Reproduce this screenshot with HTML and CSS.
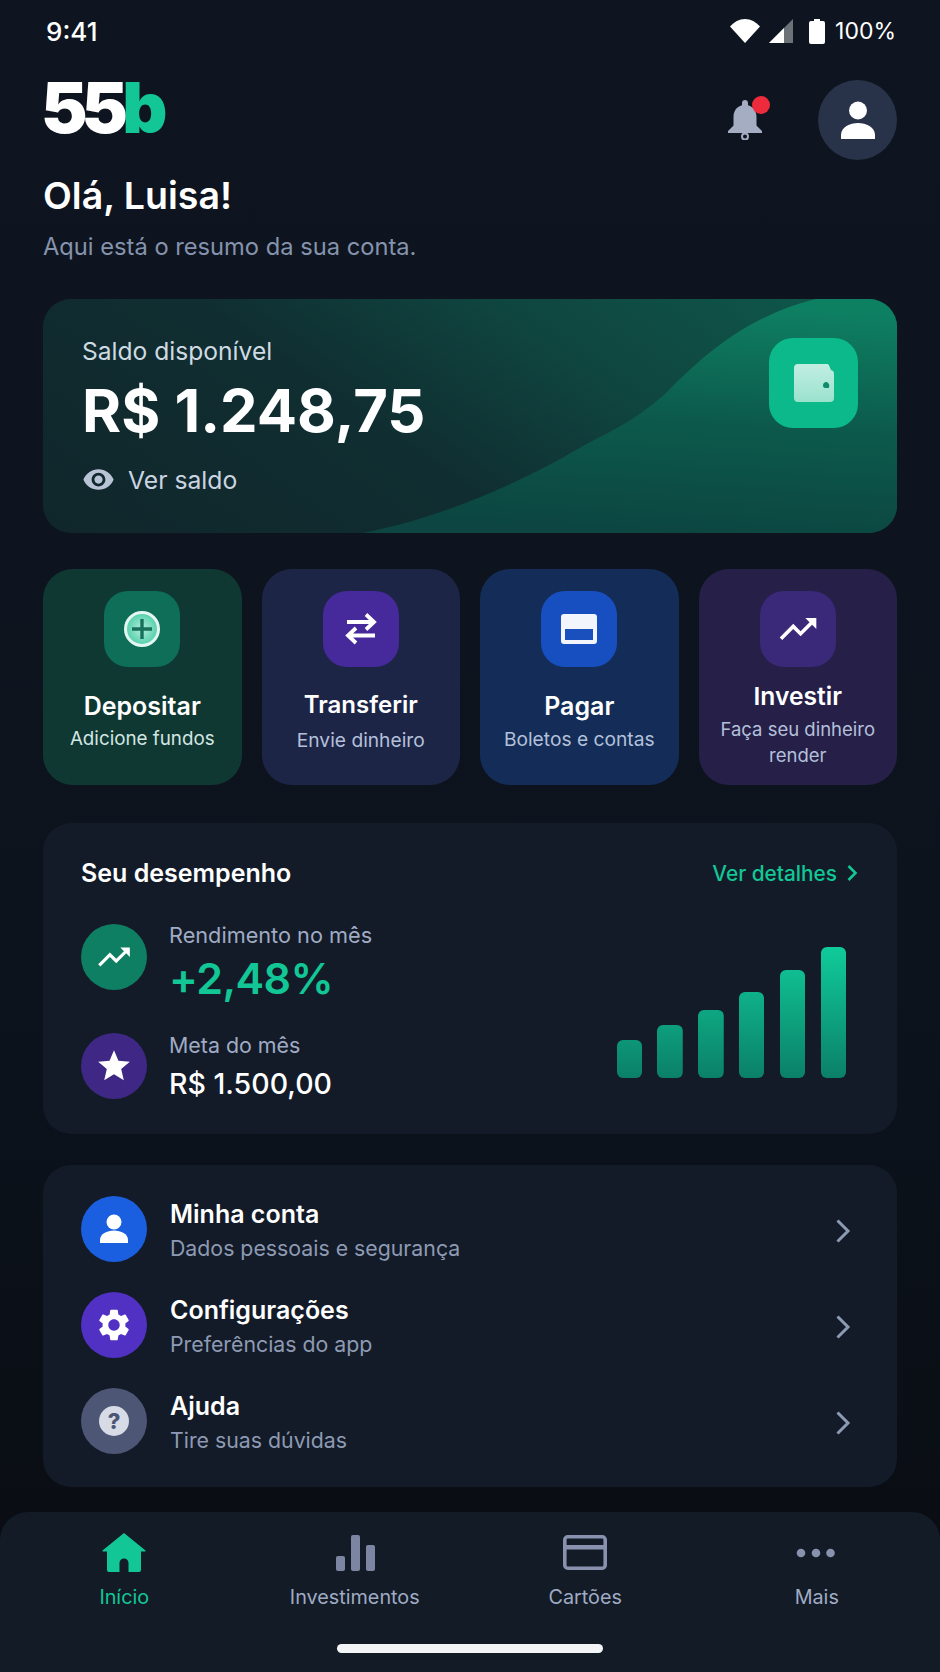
FILE: index.html
```html
<!DOCTYPE html>
<html lang="pt-BR">
<head>
  <meta charset="UTF-8" />
  <meta name="viewport" content="width=device-width, initial-scale=1.0"/>
  <title>55b - Início</title>
  <link rel="stylesheet" href="styles.css">
</head>
<body>
  <div class="screen">

    <!-- Status bar -->
    <div class="status-bar">
      <span class="status-time">9:41</span>
      <div class="status-icons">
        <svg class="icon-wifi" viewBox="0 0 30 24"><path d="M15 24 0 7.500C4 3 9.200 0 15 0s11 3 15 7.500z" fill="#fff"/></svg>
        <svg class="icon-signal" viewBox="0 0 24 24"><path d="M24 0v24H0z" fill="#6d7278"/><path d="M15 9v15H0z" fill="#fff"/></svg>
        <svg class="icon-battery" viewBox="0 0 16 25"><path d="M5 0h6v2h3a2 2 0 0 1 2 2v19a2 2 0 0 1-2 2H2a2 2 0 0 1-2-2V4a2 2 0 0 1 2-2h3z" fill="#fff"/></svg>
        <span class="status-pct">100%</span>
      </div>
    </div>

    <main class="content">
      <!-- Header -->
      <header class="top">
        <div class="logo">55<span class="logo-b">b</span></div>
        <div class="top-actions">
          <div class="bell">
            <svg viewBox="0 0 34 40"><path d="M17 0c1.800 0 3 1.300 3 3v2.300c5.600 1.500 8.500 6 8.500 11.700v8.500L34 31v2H0v-2l5.500-5.500V17c0-5.700 2.900-10.200 8.500-11.700V3c0-1.700 1.200-3 3-3z" fill="#a4adc2"/><circle cx="17" cy="36.500" r="3" fill="none" stroke="#a4adc2" stroke-width="2"/></svg>
            <span class="bell-dot"></span>
          </div>
          <div class="avatar">
            <svg viewBox="0 0 36 38"><circle cx="18" cy="9.500" r="9" fill="#fff"/><path d="M1 38v-4c0-8 9-12 17-12s17 4 17 12v4z" fill="#fff"/></svg>
          </div>
        </div>
      </header>

      <h1 class="hello">Olá, Luisa!</h1>
      <p class="hello-sub">Aqui está o resumo da sua conta.</p>

      <!-- Saldo -->
      <section class="balance">
        <svg class="balance-wave" viewBox="0 0 854 234" preserveAspectRatio="none">
          <defs>
            <linearGradient id="waveFill" x1="0.6" y1="0" x2="0.45" y2="1">
              <stop offset="0" stop-color="#0e8062"/>
              <stop offset="0.5" stop-color="#0c5a4c"/>
              <stop offset="1" stop-color="#0c4541"/>
            </linearGradient>
          </defs>
          <path d="M320 234C400 218 470 186 521 158 565 132 590 125 625 92 655 62 700 18 773 0H854V234z" fill="url(#waveFill)"/>
        </svg>
        <div class="balance-text">
          <div class="balance-label">Saldo disponível</div>
          <div class="balance-value">R$ 1.248,75</div>
          <div class="balance-toggle">
            <svg viewBox="0 0 24 24"><path d="M12 4.500C7 4.500 2.730 7.610 1 12c1.730 4.390 6 7.500 11 7.500s9.270-3.110 11-7.500c-1.730-4.390-6-7.500-11-7.500zM12 17c-2.760 0-5-2.240-5-5s2.240-5 5-5 5 2.240 5 5-2.240 5-5 5zm0-8c-1.660 0-3 1.340-3 3s1.340 3 3 3 3-1.340 3-3-1.340-3-3-3z" fill="#b9c3d6"/></svg>
            <span>Ver saldo</span>
          </div>
        </div>
        <div class="balance-icon">
          <svg viewBox="0 0 40 38">
            <defs><linearGradient id="walletFill" x1="0" y1="0" x2="0" y2="1"><stop offset="0" stop-color="#c2eee2"/><stop offset="1" stop-color="#9ae2cd"/></linearGradient></defs>
            <path d="M4 0h29c1 0 1.800.6 2.100 1.500L37 6h-1a4 4 0 0 1 4 4v24a4 4 0 0 1-4 4H4a4 4 0 0 1-4-4V4a4 4 0 0 1 4-4z" fill="url(#walletFill)"/>
            <path d="M29 21.500c0-2 1.500-3.500 3.300-3.500 1.300 0 2.200 1 2.700 2.300.5 1.100.3 3.700-.5 3.700H31c-1.200 0-2-1.100-2-2.500z" fill="#0e8a6c"/>
          </svg>
        </div>
      </section>

      <!-- Ações -->
      <section class="actions">
        <div class="action action-green">
          <div class="action-tile">
            <svg viewBox="0 0 36 36"><defs><radialGradient id="plusFill"><stop offset="0" stop-color="#b7ecdc"/><stop offset="1" stop-color="#4fcfa9"/></radialGradient></defs><circle cx="18" cy="18" r="16.500" fill="url(#plusFill)" stroke="#e4f6f1" stroke-width="3"/><path d="M18 8v20M8 18h20" stroke="#17705c" stroke-width="3.400"/></svg>
          </div>
          <div class="action-text">
            <div class="action-title">Depositar</div>
            <div class="action-sub">Adicione fundos</div>
          </div>
        </div>
        <div class="action action-indigo">
          <div class="action-tile">
            <svg viewBox="0 0 32 32"><path d="M2 9h27M21 1.500 29 9l-8 7.500" fill="none" stroke="#fff" stroke-width="3.800"/><path d="M30 22.500H3M11 15l-8 7.500 8 7.500" fill="none" stroke="#fff" stroke-width="3.800"/></svg>
          </div>
          <div class="action-text">
            <div class="action-title">Transferir</div>
            <div class="action-sub">Envie dinheiro</div>
          </div>
        </div>
        <div class="action action-blue">
          <div class="action-tile">
            <svg viewBox="0 0 36 30"><rect width="36" height="30" rx="3" fill="#f2f5fb"/><rect x="4" y="15" width="28" height="11" fill="#1a4fbe"/></svg>
          </div>
          <div class="action-text">
            <div class="action-title">Pagar</div>
            <div class="action-sub">Boletos e contas</div>
          </div>
        </div>
        <div class="action action-purple">
          <div class="action-tile">
            <svg viewBox="0 0 24 24"><path d="M16 6l2.290 2.290-4.880 4.880-4-4L2 16.590 3.410 18l6-6 4 4 6.300-6.290L22 12V6z" fill="#fff"/></svg>
          </div>
          <div class="action-text">
            <div class="action-title">Investir</div>
            <div class="action-sub">Faça seu dinheiro render</div>
          </div>
        </div>
      </section>

      <!-- Desempenho -->
      <section class="panel perf">
        <div class="perf-head">
          <h2 class="perf-title">Seu desempenho</h2>
          <div class="perf-link">Ver detalhes
            <svg viewBox="0 0 12 18"><path d="M2.500 2l7 7-7 7" fill="none" stroke="#12c795" stroke-width="2.600"/></svg>
          </div>
        </div>
        <div class="perf-body">
          <div class="metrics">
            <div class="metric">
              <div class="round-icon bg-green">
                <svg viewBox="0 0 24 24"><path d="M16 6l2.290 2.290-4.880 4.880-4-4L2 16.590 3.410 18l6-6 4 4 6.300-6.290L22 12V6z" fill="#fff"/></svg>
              </div>
              <div class="metric-text">
                <div class="metric-label">Rendimento no mês</div>
                <div class="metric-value metric-up">+2,48%</div>
              </div>
            </div>
            <div class="metric">
              <div class="round-icon bg-violet">
                <svg viewBox="0 0 24 24"><path d="M12 17.270 18.180 21l-1.640-7.030L22 9.240l-7.190-.61L12 2 9.190 8.630 2 9.240l5.460 4.730L5.820 21z" fill="#fff"/></svg>
              </div>
              <div class="metric-text metric-text-small">
                <div class="metric-label">Meta do mês</div>
                <div class="metric-value">R$ 1.500,00</div>
              </div>
            </div>
          </div>
          <div class="bars">
            <div class="bar" style="height: 38px"></div>
            <div class="bar" style="height: 53px"></div>
            <div class="bar" style="height: 68px"></div>
            <div class="bar" style="height: 86px"></div>
            <div class="bar" style="height: 108px"></div>
            <div class="bar" style="height: 131px"></div>
          </div>
        </div>
      </section>

      <!-- Menu -->
      <section class="panel menu">
        <div class="menu-row">
          <div class="round-icon bg-blue">
            <svg viewBox="0 0 30 30"><circle cx="15" cy="8" r="7.500" fill="#fff"/><path d="M1 29v-3c0-6 7-9.500 14-9.500S29 20 29 26v3z" fill="#fff"/></svg>
          </div>
          <div class="menu-text">
            <div class="menu-title">Minha conta</div>
            <div class="menu-sub">Dados pessoais e segurança</div>
          </div>
          <svg class="menu-arrow" viewBox="0 0 16 26"><path d="M2.500 2.500 13 13 2.500 23.500" fill="none" stroke="#8d9ab5" stroke-width="3"/></svg>
        </div>
        <div class="menu-row">
          <div class="round-icon bg-indigo">
            <svg viewBox="0 0 24 24"><path fill-rule="evenodd" d="M19.140 12.940c.04-.3.06-.61.06-.94 0-.32-.02-.64-.07-.94l2.030-1.580c.18-.14.23-.41.12-.61l-1.920-3.320c-.12-.22-.37-.29-.59-.22l-2.390.96c-.5-.38-1.030-.7-1.620-.94l-.36-2.540c-.04-.24-.24-.41-.48-.41h-3.840c-.24 0-.43.17-.47.41l-.36 2.540c-.59.24-1.130.57-1.620.94l-2.390-.96c-.22-.08-.47 0-.59.22L2.740 8.870c-.12.21-.08.47.12.61l2.030 1.580c-.05.3-.09.63-.09.94s.02.64.07.94l-2.030 1.580c-.18.14-.23.41-.12.61l1.920 3.320c.12.22.37.29.59.22l2.390-.96c.5.38 1.030.7 1.620.94l.36 2.540c.05.24.24.41.48.41h3.840c.24 0 .44-.17.47-.41l.36-2.540c.59-.24 1.130-.56 1.620-.94l2.390.96c.22.08.47 0 .59-.22l1.920-3.320c.12-.22.07-.47-.12-.61l-2.010-1.580zM12 15.600c-1.980 0-3.600-1.620-3.600-3.600s1.620-3.600 3.600-3.600 3.600 1.620 3.600 3.600-1.620 3.600-3.600 3.600z" fill="#fff"/></svg>
          </div>
          <div class="menu-text">
            <div class="menu-title">Configurações</div>
            <div class="menu-sub">Preferências do app</div>
          </div>
          <svg class="menu-arrow" viewBox="0 0 16 26"><path d="M2.500 2.500 13 13 2.500 23.500" fill="none" stroke="#8d9ab5" stroke-width="3"/></svg>
        </div>
        <div class="menu-row">
          <div class="round-icon bg-slate">
            <span class="help-dot">?</span>
          </div>
          <div class="menu-text">
            <div class="menu-title">Ajuda</div>
            <div class="menu-sub">Tire suas dúvidas</div>
          </div>
          <svg class="menu-arrow" viewBox="0 0 16 26"><path d="M2.500 2.500 13 13 2.500 23.500" fill="none" stroke="#8d9ab5" stroke-width="3"/></svg>
        </div>
      </section>
    </main>

    <!-- Bottom nav -->
    <nav class="nav">
      <div class="nav-items">
        <div class="nav-item nav-active">
          <svg class="nav-icon" viewBox="0 0 44 40"><path fill-rule="evenodd" d="M22 0 43.500 17.500a.6.6 0 0 1-.4 1H39V37a2 2 0 0 1-2 2H7a2 2 0 0 1-2-2V18.500H.9a.6.6 0 0 1-.4-1zM17.500 39H26.500V30a4.500 4.500 0 0 0-9 0z" fill="#12c795"/></svg>
          <span>Início</span>
        </div>
        <div class="nav-item">
          <svg class="nav-icon" viewBox="0 0 44 40"><rect x="3" y="23" width="9" height="15" rx="2" fill="#7c86a3"/><rect x="18" y="2" width="9" height="36" rx="2" fill="#7c86a3"/><rect x="33" y="12" width="9" height="26" rx="2" fill="#7c86a3"/></svg>
          <span>Investimentos</span>
        </div>
        <div class="nav-item">
          <svg class="nav-icon" viewBox="0 0 44 40"><rect x="1.800" y="3.800" width="40.400" height="31.400" rx="3" fill="none" stroke="#8891ad" stroke-width="3.600"/><rect x="2" y="12" width="40" height="4.500" fill="#8891ad"/></svg>
          <span>Cartões</span>
        </div>
        <div class="nav-item">
          <svg class="nav-icon" viewBox="0 0 44 40"><circle cx="7" cy="20" r="4.300" fill="#8891ad"/><circle cx="22" cy="20" r="4.300" fill="#8891ad"/><circle cx="36.500" cy="20" r="4.300" fill="#8891ad"/></svg>
          <span class="nav-more">Mais</span>
        </div>
      </div>
      <div class="home-bar"></div>
    </nav>
  </div>
</body>
</html>
```

FILE: styles.css
```css
* { box-sizing: border-box; }
body {
  margin: 0;
  background: #0c121b;
  font-family: Inter, "Noto Sans", sans-serif;
  color: #fff;
}
h1, h2, p { margin: 0; }
svg { display: block; }
.screen {
  width: 940px;
  height: 1672px;
  display: flex;
  flex-direction: column;
  overflow: hidden;
  background: linear-gradient(180deg, #0e1520 0%, #0c131d 60%, #0a0e14 90%);
}

/* ---------- Status bar ---------- */
.status-bar {
  height: 62px;
  flex: none;
  padding: 0 44px 0 46px;
  display: flex;
  justify-content: space-between;
  align-items: center;
  font-size: 26px;
  font-weight: 500;
}
.status-icons { display: flex; align-items: center; }
.icon-wifi { width: 30px; height: 24px; }
.icon-signal { width: 24px; height: 24px; margin-left: 9px; }
.icon-battery { width: 16px; height: 25px; margin-left: 16px; }
.status-pct { margin-left: 10px; font-size: 23px; font-weight: 400; }

/* ---------- Header ---------- */
.content { padding: 17px 43px 0; }
.top {
  height: 81px;
  display: flex;
  justify-content: space-between;
  align-items: center;
}
.logo {
  font-size: 70px;
  line-height: 60px;
  font-weight: 900;
  letter-spacing: -6px;
  height: 60px;
  margin: 0 0 24px -2px;
}
.logo-b { color: #12c795; }
.top-actions { display: flex; align-items: center; gap: 56px; }
.bell { position: relative; width: 34px; height: 40px; }
.bell-dot {
  position: absolute;
  top: -4px;
  right: -8px;
  width: 18px;
  height: 18px;
  border-radius: 50%;
  background: #ee2b3c;
}
.avatar {
  width: 79px;
  height: 80px;
  border-radius: 50%;
  background: #28334a;
  display: flex;
  align-items: center;
  justify-content: center;
}
.avatar svg { width: 36px; height: 38px; }
.hello {
  margin-top: 14px;
  font-size: 37.500px;
  line-height: 44px;
  font-weight: 600;
}
.hello-sub {
  margin-top: 15px;
  font-size: 23.700px;
  line-height: 28px;
  color: #8593ad;
}

/* ---------- Saldo ---------- */
.balance {
  position: relative;
  margin-top: 38px;
  height: 234px;
  padding: 39px 39px 0;
  display: flex;
  justify-content: space-between;
  border-radius: 28px;
  overflow: hidden;
  background: linear-gradient(35deg, #10262b 0%, #102e31 41%, #0f4640 67%, #0f5a4c 100%);
}
.balance-wave { position: absolute; left: 0; top: 0; width: 100%; height: 100%; }
.balance-text, .balance-icon { position: relative; }
.balance-text { margin-top: -1px; }
.balance-label { font-size: 24.600px; line-height: 28px; color: #cfdbe2; }
.balance-value { margin-top: 13px; font-size: 59.700px; line-height: 64px; font-weight: 700; }
.balance-toggle {
  margin-top: 21px;
  display: flex;
  align-items: center;
  gap: 13px;
  font-size: 24.700px;
  line-height: 28px;
  color: #cbd5e1;
}
.balance-toggle svg { width: 33px; height: 33px; }
.balance-icon {
  width: 89px;
  height: 90px;
  border-radius: 24px;
  background: #0bb98a;
  display: flex;
  align-items: center;
  justify-content: center;
}
.balance-icon svg { width: 40px; height: 38px; }

/* ---------- Ações ---------- */
.actions {
  margin-top: 36px;
  display: grid;
  grid-template-columns: repeat(4, 1fr);
  gap: 20px;
}
.action {
  height: 216px;
  padding-top: 22px;
  border-radius: 30px;
  display: flex;
  flex-direction: column;
  align-items: center;
  text-align: center;
}
.action-tile {
  width: 76px;
  height: 76px;
  flex: none;
  border-radius: 24px;
  display: flex;
  align-items: center;
  justify-content: center;
}
.action-text {
  flex: 1;
  display: flex;
  flex-direction: column;
  justify-content: center;
  padding-bottom: 10px;
}
.action-title { font-size: 25px; line-height: 30px; font-weight: 600; }
.action-sub {
  margin-top: 5px;
  padding: 0 20px;
  font-size: 19.200px;
  line-height: 26px;
  color: #b4c0da;
}
.action-green { background: #0f3833; }
.action-green .action-tile { background: #0e6e58; }
.action-green .action-tile svg { width: 36px; height: 36px; }
.action-green .action-sub { font-size: 18.800px; color: #d3e6e2; }
.action-indigo { background: #1d2547; }
.action-indigo .action-tile { background: #46299a; }
.action-indigo .action-tile svg { width: 32px; height: 32px; }
.action-indigo .action-title { font-size: 24px; }
.action-indigo .action-sub { margin-top: 7px; }
.action-blue { background: #132d58; }
.action-blue .action-tile { background: #184fc0; }
.action-blue .action-tile svg { width: 36px; height: 30px; }
.action-purple { background: #261f48; }
.action-purple .action-tile { background: #3a2878; }
.action-purple .action-tile svg { width: 44px; height: 44px; }
.action-purple .action-text { padding-bottom: 4px; }
.action-purple .action-title { font-size: 24.600px; }
.action-purple .action-sub { font-size: 18.500px; }

/* ---------- Painéis ---------- */
.panel { background: #131b28; border-radius: 28px; }
.round-icon {
  width: 66px;
  height: 66px;
  flex: none;
  border-radius: 50%;
  display: flex;
  align-items: center;
  justify-content: center;
}
.bg-green { background: #0e7f63; }
.bg-violet { background: #3f2885; }
.bg-blue { background: #1a5fe0; }
.bg-indigo { background: #5130c4; }
.bg-slate { background: #4e5676; }

/* ---------- Desempenho ---------- */
.perf { margin-top: 38px; height: 311px; padding: 36px 39px 0 38px; }
.perf-head {
  display: flex;
  justify-content: space-between;
  align-items: center;
  height: 28px;
}
.perf-title { font-size: 25px; font-weight: 600; line-height: 28px; }
.perf-link {
  display: flex;
  align-items: center;
  gap: 9px;
  font-size: 20.800px;
  font-weight: 500;
  color: #12c795;
}
.perf-link svg { width: 12px; height: 18px; }
.perf-body {
  margin-top: 36px;
  display: flex;
  justify-content: space-between;
}
.metrics { display: flex; flex-direction: column; gap: 42px; }
.metric { display: flex; align-items: center; gap: 22px; height: 67px; }
.metric .round-icon svg { width: 38px; height: 38px; }
.metric-text { display: flex; flex-direction: column; gap: 9px; }
.metric-label { font-size: 21.700px; line-height: 34px; color: #a0abc4; }
.metric-value { font-size: 43px; line-height: 34px; font-weight: 600; letter-spacing: -0.6px; }
.metric-up { color: #12c795; }
.metric-text-small { gap: 9px; margin-top: -2px; }
.metric-text-small .metric-label { font-size: 21.400px; line-height: 30px; }
.metric-text-small .metric-value { font-size: 28.500px; line-height: 30px; font-weight: 500; letter-spacing: 0; }
.bars {
  display: flex;
  align-items: flex-end;
  gap: 15.300px;
  height: 131px;
  margin: 24px 12px 0 0;
}
.bar {
  width: 25.500px;
  border-radius: 6px;
  background: linear-gradient(180deg, #10cb99, #0b8068) bottom / 100% 131px no-repeat;
}

/* ---------- Menu ---------- */
.menu {
  margin-top: 31px;
  height: 322px;
  padding: 31px 46px 0 38px;
  display: flex;
  flex-direction: column;
  gap: 30px;
}
.menu-row { display: flex; align-items: center; gap: 23px; height: 66px; }
.menu-text { flex: 1; padding-top: 4px; }
.menu-title { font-size: 25px; line-height: 30px; font-weight: 600; }
.menu-sub { margin-top: 4px; font-size: 21.300px; line-height: 30px; color: #8e9ab3; }
.menu-arrow { width: 16px; height: 26px; margin-top: 4px; }
.bg-indigo svg { width: 38px; height: 38px; }
.bg-blue svg { width: 30px; height: 30px; }
.help-dot {
  width: 30px;
  height: 30px;
  border-radius: 50%;
  background: #d7dbe6;
  color: #4e5676;
  font-size: 22px;
  line-height: 30px;
  font-weight: 800;
  text-align: center;
}

/* ---------- Bottom nav ---------- */
.nav {
  margin-top: auto;
  height: 160px;
  flex: none;
  padding: 21px 9px 0;
  background: #131b27;
  border-radius: 28px 28px 0 0;
  display: flex;
  flex-direction: column;
}
.nav-items { display: grid; grid-template-columns: repeat(4, 1fr); }
.nav-item {
  display: flex;
  flex-direction: column;
  align-items: center;
  font-size: 19.800px;
  line-height: 26px;
  color: #a0abc4;
}
.nav-icon { width: 44px; height: 40px; margin-bottom: 11px; }
.nav-active { color: #12c795; }
.nav-more { margin-left: 2px; }
.home-bar {
  width: 266px;
  height: 9px;
  margin: 34px auto 0;
  border-radius: 5px;
  background: #f4f5f7;
}
```
